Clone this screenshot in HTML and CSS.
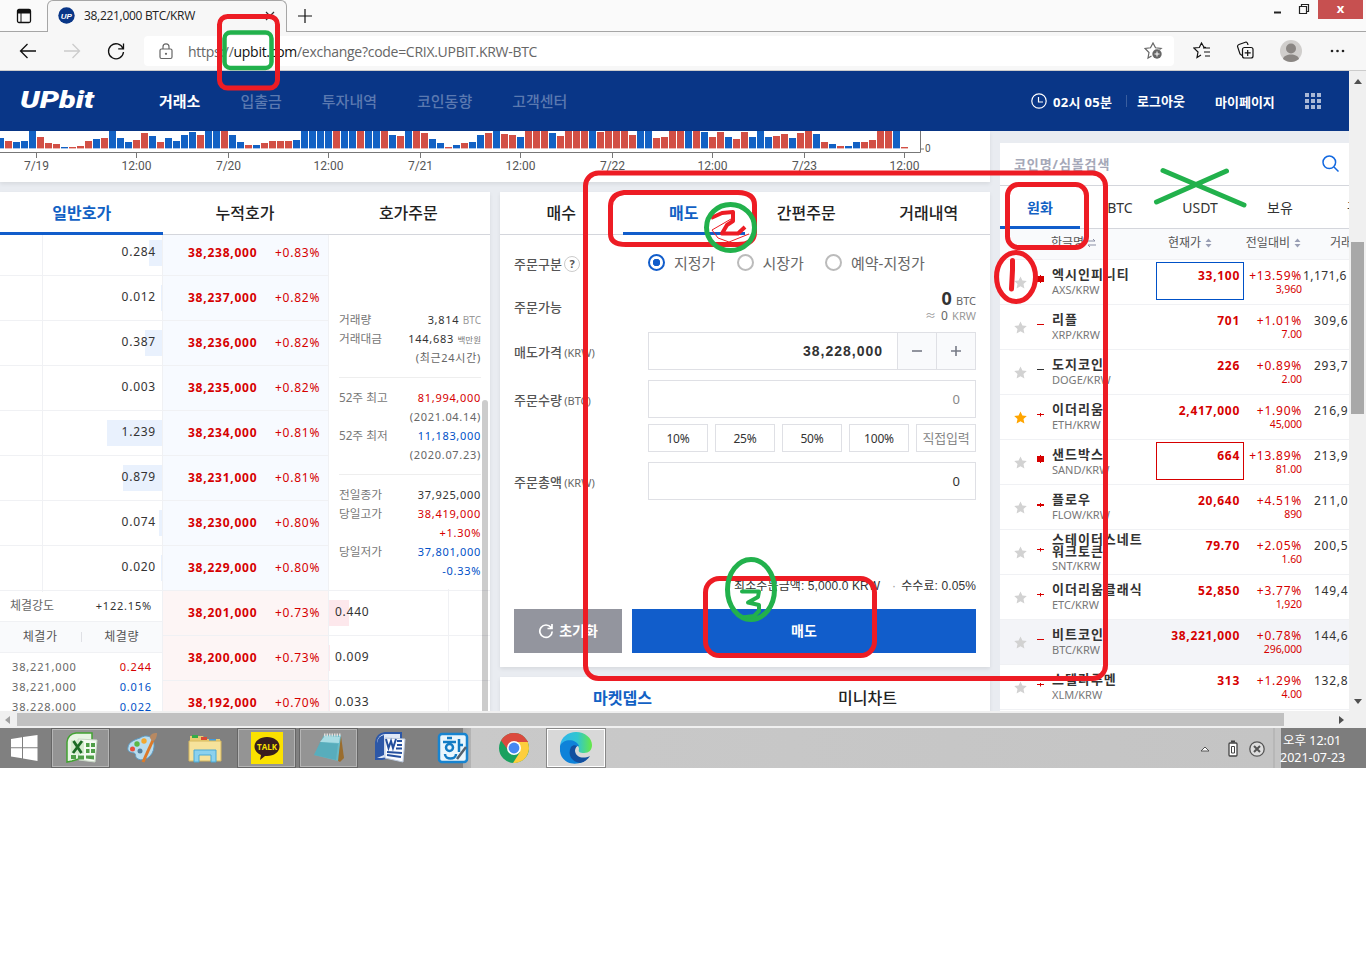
FILE: index.html
```html
<!DOCTYPE html>
<html lang="ko">
<head>
<meta charset="utf-8">
<title>38,221,000 BTC/KRW</title>
<link rel="stylesheet" href="styles.css">
</head>
<body>
<div class="desktop">
  <div class="tabstrip">
    <svg class="tab-actions" width="16" height="16" viewBox="0 0 16 16"><rect x="1.500" y="1.500" width="13" height="13" rx="1.500" fill="none" stroke="#111" stroke-width="1.300"/><path d="M1.500 2h13v3.500h-13z" fill="#111"/><path d="M5 5v9" stroke="#111"/></svg>
    <div class="tab">
      <svg width="17" height="17" viewBox="0 0 17 17"><circle cx="8.500" cy="8.500" r="8.200" fill="#093687"/><text x="8.300" y="11.500" text-anchor="middle" class="fav">UP</text></svg>
      <span class="tab-title">38,221,000 BTC/KRW</span>
      <svg width="10" height="10" viewBox="0 0 10 10"><path d="M1 1l8 8M9 1l-8 8" stroke="#333" stroke-width="1.200"/></svg>
    </div>
    <svg class="newtab" width="14" height="14" viewBox="0 0 14 14"><path d="M7 0v14M0 7h14" stroke="#111" stroke-width="1.200"/></svg>
    <div class="winctl">
      <svg width="36" height="19" viewBox="0 0 36 19"><path d="M0 12.500h7" stroke="#222" stroke-width="2"/><path d="M25.500 6.500h7v7h-7zM27.500 6V4.500h7v7H33" fill="none" stroke="#222" stroke-width="1.200"/></svg>
      <span class="close">x</span>
    </div>
  </div>
  <div class="toolbar">
    <svg class="navicons" width="106" height="20" viewBox="0 0 106 20"><g fill="none" stroke="#111" stroke-width="1.300"><path d="M17 10H1.500M8.500 3l-7 7 7 7"/><path d="M45 10h15.500M53.500 3l7 7-7 7" stroke="#ccc"/><path d="M104 7.500a7.500 7.500 0 1 0 .500 3.500M104.500 2.500v5.300h-5.300"/></g></svg>
    <div class="address">
      <svg width="14" height="17" viewBox="0 0 14 17"><g fill="none" stroke="#666" stroke-width="1.200"><rect x="1" y="6" width="12" height="9.500" rx="1.500"/><path d="M4 6V3.800a3 3 0 0 1 6 0V6"/></g><circle cx="7" cy="10.800" r="1.100" fill="#666"/></svg>
      <span class="url">https://<b>upbit.com</b>/exchange?code=CRIX.UPBIT.KRW-BTC</span>
      <svg class="addfav" width="20" height="18" viewBox="0 0 20 18"><path d="M15.500 7.500L17 6.500l-5.500-.700L9 1 6.500 5.800 1 6.500l4 4L4 16l3.500-2" fill="none" stroke="#666" stroke-width="1.200"/><circle cx="13" cy="12" r="4.700" fill="#666"/><path d="M13 9.500v5M10.500 12h5" stroke="#fff"/></svg>
    </div>
    <svg class="tools" width="156" height="24" viewBox="0 0 156 24"><g fill="none" stroke="#111" stroke-width="1.200"><path d="M13 8.500l-2-.300L8.500 4 6.300 8.500.800 9l4.200 4-1 5.500L8 16M10 9h7M11 13h6M12 17h5"/><path d="M49 16.500l-2-1.500-2.500-7.500q0-1.500 1.500-2l7-2.500q1.500 0 2 3"/><rect x="49.500" y="8.500" width="10.500" height="10.500" rx="2"/><path d="M54.700 11v6M51.700 13.800h6"/></g><circle cx="98" cy="12" r="11" fill="#d0cecc"/><circle cx="98" cy="9.500" r="5" fill="#8a8683"/><path d="M90 20c1-6 15-6 16 0-5 4-11 4-16 0z" fill="#8a8683"/><g fill="#222"><circle cx="139" cy="12" r="1.300"/><circle cx="144.500" cy="12" r="1.300"/><circle cx="150" cy="12" r="1.300"/></g></svg>
  </div>

  <div class="viewport">
    <div class="page">
      <header class="site">
        <svg class="logo" width="76" height="22" viewBox="0 0 76 22"><text x="0" y="18" class="logo-text" textLength="74" lengthAdjust="spacingAndGlyphs">UPbit</text></svg>
        <nav class="menu"><a class="on">거래소</a><a>입출금</a><a>투자내역</a><a>코인동향</a><a>고객센터</a></nav>
        <div class="account">
          <svg width="16" height="16" viewBox="0 0 16 16"><circle cx="8" cy="8" r="7.200" fill="none" stroke="#fff" stroke-width="1.200"/><path d="M7.500 4v5H12" fill="none" stroke="#fff" stroke-width="1.200"/></svg>
          <span class="clock">02시 05분</span><span class="logout">로그아웃</span><span class="mypage">마이페이지</span>
          <svg width="16" height="16" viewBox="0 0 16 16"><path d="M2 0v16M8 0v16M14 0v16" stroke="#a9b8d6" stroke-width="4" stroke-dasharray="4 2"/></svg>
        </div>
      </header>
      <div class="content">
        <div class="maincol">
          <section class="chart card">
            <div class="plot"><div class="bars" id="bars"></div><div class="zero">0</div></div>
            <svg class="axis" width="990" height="30" viewBox="0 0 990 30"><path d="M0 3.500H920.500V-18M920 0h4M36.500 3v6M136.500 3v6M228.500 3v6M328.500 3v6M420.500 3v6M520.500 3v6M612.500 3v6M712.500 3v6M804.500 3v6M904.500 3v6" fill="none" stroke="#777"/><g class="ticks" text-anchor="middle"><text x="36.500" y="20.500">7/19</text><text x="136.500" y="20.500">12:00</text><text x="228.500" y="20.500">7/20</text><text x="328.500" y="20.500">12:00</text><text x="420.500" y="20.500">7/21</text><text x="520.500" y="20.500">12:00</text><text x="612.500" y="20.500">7/22</text><text x="712.500" y="20.500">12:00</text><text x="804.500" y="20.500">7/23</text><text x="904.500" y="20.500">12:00</text></g></svg>
          </section>
          <div class="panels">
            <section class="book card">
              <div class="tabs"><a class="on">일반호가</a><a>누적호가</a><a>호가주문</a></div>
              <div class="bookgrid">
                <div class="asks">
                  <div class="rows" id="asks"></div>
                  <div class="power"><span>체결강도</span><b>+122.15%</b></div>
                  <div class="thead"><span>체결가</span><span>체결량</span></div>
                  <div class="trades"><p><span>38,221,000</span><i class="up">0.244</i></p><p><span>38,221,000</span><i class="dn">0.016</i></p><p><span>38,228,000</span><i class="dn">0.022</i></p></div>
                </div>
                <div class="rows prices" id="prices"></div>
                <div class="right">
                  <div class="info">
                    <dl><dt>거래량</dt><dd>3,814 <small>BTC</small></dd><dt>거래대금</dt><dd>144,683 <small class="tiny">백만원</small></dd><dt></dt><dd class="g">(최근24시간)</dd></dl>
                    <dl><dt>52주 최고</dt><dd class="up">81,994,000</dd><dt></dt><dd class="g">(2021.04.14)</dd><dt>52주 최저</dt><dd class="dn">11,183,000</dd><dt></dt><dd class="g">(2020.07.23)</dd></dl>
                    <dl><dt>전일종가</dt><dd>37,925,000</dd><dt>당일고가</dt><dd class="up">38,419,000</dd><dt></dt><dd class="up">+1.30%</dd><dt>당일저가</dt><dd class="dn">37,801,000</dd><dt></dt><dd class="dn">-0.33%</dd></dl>
                  </div>
                  <div class="rows bids" id="bids"></div>
                </div>
              </div>
              <i class="bookthumb"></i>
            </section>
            <div class="ordercol">
              <section class="order card">
                <div class="tabs"><a>매수</a><a class="on">매도</a><a>간편주문</a><a>거래내역</a></div>
                <div class="form">
                  <div class="line kind"><label>주문구분 <i class="help">?</i></label><div class="radios"><span class="sel">지정가</span><span>시장가</span><span>예약-지정가</span></div></div>
                  <div class="line avail"><label>주문가능</label><div class="bal"><p><b>0</b> <small>BTC</small></p><p class="sub"><small class="approx">≈</small> 0 <small>KRW</small></p></div></div>
                  <div class="line field"><label>매도가격 <small>(KRW)</small></label><div class="input price"><b>38,228,000</b><span><svg width="12" height="12"><path d="M1 6h10" stroke="#777b86" stroke-width="1.600"/></svg></span><span><svg width="12" height="12"><path d="M1 6h10M6 1v10" stroke="#777b86" stroke-width="1.600"/></svg></span></div></div>
                  <div class="line field qty"><label>주문수량 <small>(BTC)</small></label><div class="input pale">0</div></div>
                  <div class="percents"><span>10%</span><span>25%</span><span>50%</span><span>100%</span><span class="pale">직접입력</span></div>
                  <div class="line field"><label>주문총액 <small>(KRW)</small></label><div class="input">0</div></div>
                  <div class="fee"><span>최소주문금액: 5,000.0 KRW</span><span>수수료: 0.05%</span></div>
                  <div class="actions"><span class="reset"><svg width="16" height="16" viewBox="0 0 16 16"><path d="M13 4.500A6.200 6.200 0 1 0 14.200 8.500M14 1v4.500H9.500" fill="none" stroke="#fff" stroke-width="1.700"/></svg>초기화</span><span class="sell">매도</span></div>
                </div>
              </section>
              <section class="depth card"><b>마켓뎁스</b><span>미니차트</span></section>
            </div>
          </div>
        </div>
        <aside class="coins">
          <div class="search"><span>코인명/심볼검색</span><svg width="17" height="17" viewBox="0 0 17 17"><circle cx="7.300" cy="7.300" r="6.300" fill="none" stroke="#1268e0" stroke-width="1.500"/><path d="M12 12l4.500 4.500" stroke="#1268e0" stroke-width="1.500"/></svg></div>
          <div class="markets"><a class="on">원화</a><a>BTC</a><a>USDT</a><a>보유</a><a>관심</a></div>
          <div class="colhead"><span>한글명<svg width="9" height="10" viewBox="0 0 9 10"><path d="M0 3h8L6 1M9 7H1l2 2" fill="none" stroke="#8a8fa5"/></svg></span><span>현재가<svg width="7" height="10" viewBox="0 0 7 10"><path d="M.5 4l3-3.500 3 3.500zM.5 6l3 3.500 3-3.500z" fill="#9a9fb5"/></svg></span><span>전일대비<svg width="7" height="10" viewBox="0 0 7 10"><path d="M.5 4l3-3.500 3 3.500zM.5 6l3 3.500 3-3.500z" fill="#9a9fb5"/></svg></span><span>거래대금</span></div>
          <div id="coins"></div>
        </aside>
      </div>
    </div>
    <div class="vscroll"><i class="tri up"></i><i class="vthumb"></i><i class="tri down"></i></div>
  </div>
  <div class="hscroll"><i class="tri left"></i><i class="hthumb"></i><i class="tri rightt"></i></div>

  <div class="taskbar">
    <span class="app start"><svg width="28" height="28" viewBox="0 0 28 28"><path d="M1 5l11-1.700V13.300H1zM13 3.100L27.500 1v12.300H13zM1 14.300h11v10L1 22.600zM13 14.300h14.500V27L13 24.600z" fill="#fff"/></svg></span>
    <span class="app open"><svg width="34" height="32" viewBox="0 0 34 32"><path d="M3 30V10Q4 2 12 1h16v22L8 29z" fill="#e8f5e4" stroke="#42a332" stroke-width="1.500"/><path d="M14 7l19 1-2 22-16-2z" fill="#f4faf2" stroke="#c8d8c5"/><path d="M7 8l13 1v13l-13-1z" fill="#d4ebce"/><path d="M9.500 9l8 12M18 9l-9 12" stroke="#1c6b25" stroke-width="2.800"/><path d="M22 11h3.500v4H22zM27 11h4v4h-4zM22 17h3.500v4H22zM27 17h4v4h-4zM7 23h5v4H7zM14 23.500h6v4h-6zM22 23.500h8v4l-8-1z" fill="#4f9e48"/></svg></span>
    <span class="app"><svg width="34" height="32" viewBox="0 0 34 32"><path d="M14 6c8-5 15 0 14 9-1 10-10 15-16 12-4-2-1-5-4-6-4-1-7-1-6-6S8 8 14 6z" fill="#b9dcee" stroke="#5d9cc4"/><circle cx="6.500" cy="17" r="2.500" fill="#e84f3d"/><circle cx="11" cy="12" r="2.700" fill="#5cb744"/><circle cx="18" cy="9" r="2.700" fill="#f2a72e"/><circle cx="14" cy="19" r="2.500" fill="#557f9e"/><path d="M27 8L17 30" stroke="#dc7a29" stroke-width="3"/><path d="M24 6c0-4 3-5 7-5 0 3-1 8-5 8z" fill="#b88962"/></svg></span>
    <span class="app"><svg width="34" height="32" viewBox="0 0 34 32"><path d="M2 4h13l2 3h15v22H2z" fill="#e9cd72"/><path d="M4 3h6v3H4z" fill="#35ac48"/><path d="M13 5h6v3h-6z" fill="#d84a35"/><path d="M21 7h7v2h-7z" fill="#3f9be0"/><path d="M1 9h32v20H1z" fill="#f6e29b" stroke="#d6b85e"/><path d="M6 30V18h22v12h-5v-7H11v7z" fill="#8bd1ee" stroke="#4ba9d5"/></svg></span>
    <span class="app open"><svg width="32" height="32" viewBox="0 0 32 32"><path d="M0 0h32v32H0z" fill="#fae100"/><path d="M16 5c7 0 12.500 4 12.500 9.500S23 24 16 24h-2l-5 4 1-5c-4-1.500-6.500-5-6.500-8.500C3.500 9 9 5 16 5z" fill="#381e1e"/><text x="16" y="17.500" text-anchor="middle" class="talk">TALK</text></svg></span>
    <span class="app open"><svg width="34" height="32" viewBox="0 0 34 32"><path d="M29 4l3 22-4 4-5-3z" fill="#9a6d2e"/><path d="M12 3h17l-3 26L2 23z" fill="#68b9c6"/><path d="M13 4l15 1-1 6L8 10z" fill="#a9dce4"/><path d="M8 10l18 2-2 16L2 23z" fill="#4fa5b5" opacity=".6"/><path d="M12 3h17" stroke="#ddd" stroke-width="3" stroke-dasharray="1.500 1"/></svg></span>
    <span class="app"><svg width="34" height="32" viewBox="0 0 34 32"><path d="M2 27V10Q3 2 11 1h16v22L8 27z" fill="#dfe8f7" stroke="#2c57a7" stroke-width="2"/><path d="M3 26V11Q4 4 10 3v20z" fill="#2c57a7"/><path d="M11 6l20 1-2 23-18-4z" fill="#fafcff" stroke="#bbc8dc"/><path d="M12 7l2.500 9L17 9l2 7 3-9" fill="none" stroke="#244f9d" stroke-width="2"/><path d="M23 9h5M23 13h5M22 16.500h6M13 20l15 1M13 23l14 2" stroke="#244f9d" stroke-width="1.800"/></svg></span>
    <span class="app"><svg width="32" height="32" viewBox="0 0 32 32"><rect x="2" y="2" width="28" height="28" rx="3" fill="#eaf6fd" stroke="#1884d0" stroke-width="2.500"/><g fill="none" stroke="#127bc4" stroke-width="2.500"><path d="M10 6h5M6 10h13M8 22c0 6 11 6 11 0M22 7v13M22 13h4"/><circle cx="12.500" cy="15.500" r="3.500"/></g><path d="M29 15l-9 12" stroke="#54606c" stroke-width="2.500"/></svg></span>
    <span class="app chrome"><svg width="30" height="30" viewBox="0 0 30 30"><circle cx="15" cy="15" r="15" fill="#1aa15f"/><path d="M2 7.500A15 15 0 0 1 28 7.500Q30 9 28.500 9H15L9 17z" fill="#db4a3e"/><path d="M15 9h13.700A15 15 0 0 1 14 30l7-11z" fill="#fdce3d"/><circle cx="15" cy="15" r="7" fill="#fff"/><circle cx="15" cy="15" r="5.400" fill="#4587f3"/></svg></span>
    <span class="app open active"><svg width="32" height="32" viewBox="0 0 32 32"><defs><linearGradient id="eg" x1="0" x2="1"><stop offset="0" stop-color="#2fb4ee"/><stop offset=".55" stop-color="#31c6cf"/><stop offset="1" stop-color="#66e845"/></linearGradient></defs><path d="M0 14C1 5 8 0 16 0c9 0 16 6 16 13 0 5-3 8-8 8-4 0-6-1-5-4 0-5-9-9-19-3z" fill="url(#eg)"/><path d="M0 14c4-8 16-7 19 0-5 0-7 5-4 10 3 4 8 4 11 4C15 36-2 31 0 14z" fill="#0e82d9"/><path d="M11 15c-4 8 1 15 9 16 5-1 8-4 10-7-6 3-14 2-15-5 0-2 1-4 2-5-2-1-4-1-6 1z" fill="#124f9f"/></svg></span>
    <div class="tray"><svg width="66" height="20" viewBox="0 0 66 20"><path d="M1 12l4-4 4 4z" fill="#fff" stroke="#555"/><rect x="29" y="4" width="8" height="13" rx="1" fill="#fff" stroke="#444" stroke-width="1.300"/><path d="M31 2.500h4" stroke="#444" stroke-width="2"/><path d="M31.500 7.500h3v6.500h-3z" stroke="#444" fill="#fff"/><circle cx="57" cy="10" r="7.200" fill="#ddd" stroke="#555" stroke-width="1.300"/><path d="M54 7l6 6M60 7l-6 6" stroke="#555" stroke-width="2"/></svg></div>
    <div class="time"><span>오후 12:01</span><span>2021-07-23</span></div>
  </div>

  <svg class="marks" width="1366" height="959" viewBox="0 0 1366 959">
    <g fill="none" stroke="#ed1c24" stroke-width="5">
      <rect x="219.500" y="16.500" width="58" height="71.500" rx="8"/>
      <rect x="585.500" y="173" width="520" height="505.500" rx="13"/>
      <rect x="1007.500" y="184.500" width="79" height="63" rx="11"/>
      <path d="M624 192.500H738Q754.500 193 754.500 205V232Q754.500 244.500 738 244.500H626Q610.500 244.500 610.500 234V206Q611 194 624 192.500z"/>
      <rect x="705.500" y="578.500" width="169" height="77" rx="14"/>
      <ellipse cx="1016" cy="277" rx="19.500" ry="24.500"/>
      <path d="M1012.500 260.500V270L1011.500 289" stroke-linecap="round"/>
      <path d="M711 218L722 213L733 212V221L727 225L722 233.500H738L745 227" stroke-width="4" stroke-linejoin="round"/>
      <path d="M731 219L712 230L718 238L729 242L749 234" stroke-width="1"/>
    </g>
    <g fill="none" stroke="#22b14c" stroke-width="5" stroke-linecap="round" stroke-linejoin="round">
      <rect x="224.500" y="32.500" width="47" height="35.500" rx="6" stroke-width="4.500"/>
      <ellipse cx="730.500" cy="227.500" rx="24" ry="23"/>
      <ellipse cx="751" cy="589.500" rx="23.500" ry="30"/>
      <path d="M742 591.500H759L758 597L748 602.500L759 605V611L754 616L742 617.500" stroke-width="4"/>
      <path d="M1163 170.500l81 34.500M1156.500 202l70-31"/>
    </g>
  </svg>
</div>
<script src="app.js"></script>
</body>
</html>
```

FILE: styles.css
```css
*, *::before, *::after { box-sizing: border-box; }
body { margin: 0; background: #fff; font-family: "Noto Sans", "Noto Sans CJK KR", sans-serif; font-size: 12px; color: #333; }
p, dl, dd { margin: 0; }
svg { display: block; flex: none; }
i { font-style: normal; }
.desktop { position: relative; width: 1366px; height: 959px; overflow: hidden; }
.marks { position: absolute; left: 0; top: 0; }
.up { color: #d60000; }
.dn { color: #0051c7; }

/* browser chrome */
.tabstrip { display: flex; height: 32px; background: #fafafa; border-bottom: 1px solid #a6a6a6; font-family: "Open Sans", sans-serif; }
.tab-actions { margin: 8px 15px 0 16px; }
.tab { display: flex; align-items: center; width: 240px; height: 32px; padding: 0 11px 2px 10px; background: #f7f7f7; border: 1px solid #a6a6a6; border-bottom: 0; border-radius: 6px 6px 0 0; }
.tab-title { flex: 1; margin-left: 9px; color: #222; font-size: 12px; letter-spacing: -.3px; }
.fav { font: italic bold 8px "Liberation Sans", sans-serif; fill: #fff; }
.newtab { margin: 9px 0 0 11px; }
.winctl { display: flex; margin-left: auto; padding-right: 3px; }
.winctl svg { margin-right: 8px; }
.close { width: 45px; height: 19px; background: #c75050; color: #fff; text-align: center; font: bold 13px/17px "Open Sans", sans-serif; }
.toolbar { display: flex; align-items: center; height: 39px; background: #f7f7f7; border-bottom: 1px solid #ccc; padding-left: 19px; }
.navicons { margin-right: 19px; }
.address { display: flex; align-items: center; width: 1030px; height: 30px; margin-right: 19px; padding: 0 10px 0 15px; background: #fff; border-radius: 4px; }
.url { margin-left: 15px; font: 14px "Open Sans", sans-serif; color: #666; letter-spacing: -.28px; }
.url b { color: #111; font-weight: 400; }
.addfav { margin-left: auto; }

/* viewport and scrollbars */
.viewport { display: flex; height: 640px; }
.page { width: 1349px; height: 640px; overflow: hidden; background: #e9ecf1; }
.vscroll { display: flex; flex-direction: column; align-items: center; width: 17px; background: #f0f0f0; }
.vthumb { width: 13px; height: 172px; margin: 158px 0 auto; background: #a8a8a8; }
.tri { width: 0; height: 0; border: 4px solid transparent; }
.tri.up { border-bottom: 5px solid #505050; border-top: 0; margin-top: 8px; }
.tri.down { border-top: 5px solid #505050; border-bottom: 0; margin-bottom: 7px; }
.hscroll { display: flex; align-items: center; height: 17px; background: #f0f0f0; }
.tri.left { margin: 0 7px 0 1px; border-right: 5px solid #a0a0a0; }
.tri.rightt { margin: 0 18px 0 auto; border-left: 5px solid #505050; }
.hthumb { width: 1267px; height: 13px; background: #c1c1c1; }

/* site header */
.site { display: flex; align-items: center; height: 60px; background: #093687; color: #fff; padding-left: 20px; }
.logo-text { font: italic 900 24px "Roboto", sans-serif; fill: #fff; }
.menu { display: flex; gap: 40px; margin-left: 63px; padding-bottom: 2px; font-size: 15px; font-weight: 500; color: #5b79b0; }
.menu .on { color: #fff; font-weight: 700; }
.account { display: flex; align-items: center; margin-left: auto; padding-right: 28px; font-size: 13px; font-weight: 700; }
.clock { width: 73px; margin-left: 6px; white-space: nowrap; letter-spacing: .3px; }
.logout { width: 89px; padding-left: 10px; border-left: 1px solid #3a5e9f; line-height: 12px; }
.mypage { width: 90px; }
.content { display: flex; gap: 10px; }
.maincol { flex: none; width: 990px; }
.card { background: #fff; box-shadow: 0 2px 4px rgba(0, 0, 0, .08); }

/* chart */
.chart { height: 51px; overflow: hidden; }
.plot { display: flex; align-items: flex-end; height: 18px; }
.bars { display: flex; align-items: flex-end; gap: 1px; width: 908px; height: 18px; overflow: hidden; justify-content: flex-end; }
.bars i { flex: none; width: 7px; background: #1261c4; border-bottom: 1px solid #a9c5ea; }
.bars i.r { background: #d24f45; border-bottom-color: #edb9b5; }
.zero { margin-left: 17px; font: 10px/10px "Roboto", sans-serif; color: #555; height: 5px; }
.axis { overflow: visible; }
.ticks { font: 12px "Roboto", sans-serif; fill: #555; }

/* panels */
.panels { display: flex; gap: 10px; margin-top: 10px; }
.tabs { display: flex; height: 43px; border-bottom: 1px solid #d4d6dc; font-size: 16px; font-weight: 500; color: #222; }
.tabs a { flex: 1; height: 43px; line-height: 43px; text-align: center; }
.tabs .on { color: #1261c4; font-weight: 700; border-bottom: 3px solid #115dcb; }
.book { position: relative; width: 490px; height: 519px; overflow: hidden; }
.bookgrid { display: grid; grid-template-columns: 163px 166px 161px; height: 476px; overflow: hidden; }
.asks { border-right: 1px solid #f0f1f4; }
.rows div { display: flex; align-items: center; height: 45px; border-bottom: 1px solid #f0f1f4; letter-spacing: .75px; }
#asks, #prices { margin-top: -4px; }
#asks div { position: relative; justify-content: flex-end; padding: 0 6px 3px 0; }
#asks div::before { content: ""; width: 43px; height: 48px; margin: 3px auto 0 0; border-right: 1px solid #f0f1f4; }
#asks div i, #bids div i { position: absolute; right: 0; top: 9px; height: 26px; background: #e9f1fd; }
.rows span { position: relative; }
#prices div { padding: 0 0 1px 25px; background: #f7faff; }
#prices { border-right: 1px solid #f0f1f4; color: #d60000; }
#prices b { width: 87px; }
#prices .b { background: #fdf5f5; }
#bids div { position: relative; padding: 0 0 3px 6px; }
#bids div::after { content: ""; width: 42px; height: 48px; margin: 3px 0 0 auto; border-left: 1px solid #f0f1f4; }
#bids div i { left: 0; right: auto; background: #fde8ec; }
.power { display: flex; justify-content: space-between; align-items: center; height: 31px; padding: 0 10px 2px 10px; border-bottom: 1px solid #f0f1f4; color: #666; font-size: 12px; }
.power b { font-size: 11px; font-weight: 400; color: #333; letter-spacing: .8px; }
.thead { display: flex; align-items: center; height: 31px; border-bottom: 1px solid #f0f1f4; background: #f9fafc; color: #555; letter-spacing: .7px; }
.thead span { flex: 1; text-align: center; line-height: 10px; }
.thead span + span { border-left: 1px solid #dfe0e5; }
.trades { padding-top: 4px; font-size: 11px; color: #666; letter-spacing: .85px; }
.trades p { display: flex; justify-content: space-between; height: 20px; line-height: 20px; padding: 0 10px 0 12px; }
.info { height: 356px; padding: 75px 9px 0 10px; border-bottom: 1px solid #f0f1f4; }
.info dl { display: grid; grid-template-columns: 52px 90px; align-content: start; height: 68px; line-height: 19px; font-size: 11px; border-bottom: 1px solid #eee; }
.info dl + dl { height: 97px; padding-top: 10px; }
.info dl + dl + dl { height: auto; padding-top: 10px; border: 0; }
.info dt { height: 19px; color: #777; white-space: nowrap; font-size: 11.700px; }
.info dd { height: 19px; text-align: right; white-space: nowrap; letter-spacing: .7px; }
.info .g { color: #666; }
.info small { font-size: 10px; color: #999; letter-spacing: 0; }
.info .tiny { font-size: 8.500px; color: #777; }
.bookthumb { position: absolute; left: 482px; top: 208px; width: 6px; height: 320px; border-radius: 3px; background: rgba(0, 0, 0, .2); }

/* order form */
.ordercol { width: 490px; }
.order { height: 475px; }
.form { padding: 0 14px; }
.line { display: flex; align-items: center; }
.line label { width: 134px; font-size: 13px; font-weight: 500; color: #555; white-space: nowrap; }
.line label small { font-size: 11px; font-weight: 400; color: #666; margin-left: -1px; }
.kind { height: 56px; }
.help { display: inline-block; width: 16px; height: 16px; border: 1px solid #ccc; border-radius: 50%; line-height: 14px; text-align: center; font-weight: 700; font-size: 11px; margin-left: -1px; vertical-align: 1px; }
.radios { display: flex; font-size: 15px; color: #666; white-space: nowrap; margin-top: -2px; }
.radios span { display: flex; align-items: center; width: 88.500px; }
.radios span::before { content: ""; width: 17px; height: 17px; margin: 1px 9px 0 0; border: 2px solid #bbb; border-radius: 50%; flex: none; }
.radios .sel::before { border-color: #115dcb; background: radial-gradient(circle, #115dcb 3.500px, #fff 4px); }
.avail { height: 31px; }
.bal { flex: 1; text-align: right; color: #666; }
.bal p { height: 17px; line-height: 17px; font-size: 12px; }
.bal b { font-size: 18px; color: #333; }
.bal small { font-size: 11px; margin-left: 1px; }
.bal .sub small { color: #999; }
.bal .approx { margin-right: 2px; }
.field { height: 38px; margin-top: 10px; }
.input { display: flex; flex: 1; align-items: center; justify-content: flex-end; height: 38px; padding-right: 15px; border: 1px solid #dfe0e5; font-size: 13px; }
.pale { color: #888; }
.price { padding: 0; font: 14px "Liberation Sans", sans-serif; letter-spacing: 1px; }
.price b { margin-right: 14px; }
.price span { display: flex; align-items: center; justify-content: center; width: 39px; height: 36px; border-left: 1px solid #dfe0e5; background: #f9fafc; }
.percents { display: flex; gap: 7px; margin: 6px 0 0 134px; }
.percents span { width: 60px; height: 28px; line-height: 27px; border: 1px solid #dfe0e5; text-align: center; letter-spacing: -.2px; white-space: nowrap; }
.percents .pale { font-size: 13px; }
.fee { display: flex; justify-content: flex-end; gap: 12px; height: 18px; margin-top: 77px; line-height: 18px; font-family: "Liberation Sans", "Noto Sans CJK KR", sans-serif; font-size: 12px; }
.fee span { letter-spacing: .1px; }
.fee span::before { content: "·"; margin-right: 5px; color: #999; }
.actions { display: flex; gap: 10px; margin-top: 14px; color: #fff; font-size: 14px; font-weight: 700; line-height: 44px; text-align: center; }
.reset { display: flex; align-items: center; justify-content: center; gap: 5px; width: 108px; background: #93959e; }
.sell { flex: 1; background: #115dcb; }
.depth { display: flex; height: 60px; margin-top: 10px; line-height: 43px; text-align: center; font-size: 16px; color: #222; }
.depth b { flex: 1; color: #1261c4; }
.depth span { flex: 1; font-weight: 500; }

/* coin list */
.coins { width: 349px; height: 600px; margin-top: 12px; background: #fff; overflow: hidden; }
.search { display: flex; align-items: center; justify-content: space-between; height: 43px; padding: 0 10px 2px 14px; border-bottom: 1px solid #d4d6dc; color: #a5a8b8; font-size: 13px; font-weight: 700; letter-spacing: .9px; }
.markets { display: flex; width: 400px; height: 43px; border-bottom: 1px solid #d4d6dc; font-size: 14px; }
.markets a { flex: none; width: 80px; height: 43px; line-height: 43px; text-align: center; }
.markets .on { color: #1261c4; font-weight: 700; border-bottom: 3px solid #115dcb; }
.colhead { display: grid; grid-template-columns: 146px 98px 60px 80px; height: 31px; line-height: 28px; background: #f9fafc; border-bottom: 1px solid #f0f1f4; color: #555; font-size: 12px; }
.colhead span { display: flex; align-items: center; justify-content: flex-end; gap: 4px; white-space: nowrap; padding-bottom: 2px; }
.colhead span:first-child { padding-right: 50px; gap: 3px; }
.colhead span:nth-child(2) { padding-right: 32px; }
.colhead span:nth-child(3) { padding-right: 3px; }
.colhead span:last-child { justify-content: flex-start; padding-left: 26px; }
.coin { display: grid; grid-template-columns: 34px 18px 104px 88px 58px 47px; height: 45px; border-bottom: 1px solid #f0f1f4; }
.coin.sel { background: #f3f4f8; }
.coin .star { margin: 16px 0 0 14px; }
.coin .candle { margin: 10px 0 0 1px; }
.nm { white-space: nowrap; line-height: 13px; font-size: 11px; color: #777; padding-top: 8px; }
.nm b { display: block; font-size: 13px; line-height: 13px; margin-bottom: 2px; color: #333; letter-spacing: 1px; }
.two .nm { padding-top: 3px; }
.two .nm b { line-height: 12px; }
.pr { height: 38px; margin-top: 2px; padding: 4px 3px 0 0; border: 1px solid transparent; text-align: right; font-weight: 700; color: #d60000; letter-spacing: .7px; line-height: 18px; }
.pr.bd { border-color: #0051c7; }
.pr.br { border-color: #d60000; }
.ch { padding-top: 8px; text-align: right; color: #d60000; line-height: 16px; white-space: nowrap; letter-spacing: .75px; }
.ch small { display: block; font-size: 10.500px; line-height: 11px; letter-spacing: -.1px; }
.ch bdi { display: block; margin-left: -6px; }
.vol { padding: 8px 0 0 12px; line-height: 16px; letter-spacing: .75px; white-space: nowrap; }
.vol.wide { padding-left: 1px; letter-spacing: .45px; }

/* taskbar */
.taskbar { display: flex; height: 40px; background: linear-gradient(90deg, #808080 463px, #aaa 463px, #b4b4b4 471px, #c9c9c9 471px, #c4c4c4 1273px, #aaa 1274px, #c4c4c4 1275px, #c4c4c4 1281px, #7d7d7d 1281px); }
.app { display: flex; align-items: center; justify-content: center; width: 59px; margin-right: 3px; height: 40px; }
.app.start { width: 48px; }
.app.open { background: #949494; border: 1px solid #666; box-shadow: inset 0 0 0 1px #b5b5b5; }
.app.active { background: #d8d8d8; border-color: #888; box-shadow: inset 0 0 0 1px #fff; width: 60px; }
.app.chrome { width: 58px; }
.talk { font: bold 8px "Open Sans", sans-serif; fill: #fae100; }
.tray { margin: 11px 14px 0 auto; }
.time { display: flex; flex-direction: column; width: 86px; padding-top: 4px; color: #fff; font-size: 12.500px; line-height: 17px; }
.time span:first-child { padding-left: 3px; }
```

FILE: app.js
```js
// Volume bars: colour (b = fall, r = rise) followed by height in pixels.
const volume = 'b11 r8 b7 b8 b18 r12 r6 r5 b2 r2 r3 r8 b10 r11 b18 b11 b7 r9 r16 b13 r7 b11 b8 b14 b17 r14 b18 b18 r18 b14 b7 r4 b4 r6 r8 r8 r8 b9 b18 b18 b18 b18 r18 b18 b18 r18 b18 b18 r18 b14 r13 b18 r18 r16 b10 b6 r2 b4 r6 b7 b14 r16 b18 r15 r14 b12 r18 r18 r18 b16 r13 r18 r18 r18 b18 r17 r18 r18 r18 r14 b18 b18 r11 r12 r18 r18 b18 r18 b17 r12 r17 b12 r10 r17 b12 b18 b12 r13 r15 b11 r16 r18 b15 r7 b5 r3 b3 b7 r7 r9 r18 r18 b18 r2';
const put = (id, html) => { document.getElementById(id).innerHTML = html; };

put('bars', volume.split(' ').map(v => `<i class="${v[0]}" style="height:${v.slice(1)}px"></i>`).join(''));

const asks = [['0.284', 13], ['0.012', 1], ['0.387', 17], ['0.003', 0], ['1.239', 55], ['0.879', 39], ['0.074', 3], ['0.020', 1]];
put('asks', asks.map(([v, w]) => `<div><i style="width:${w}px"></i><span>${v}</span></div>`).join(''));

const prices = [['238', '83'], ['237', '82'], ['236', '82'], ['235', '82'], ['234', '81'], ['231', '81'], ['230', '80'], ['229', '80'], ['201', '73'], ['200', '73'], ['192', '70']];
put('prices', prices.map(([p, c], i) => `<div class="${i > 7 ? 'b' : 'a'}"><b>38,${p},000</b><span>+0.${c}%</span></div>`).join(''));

put('bids', [['0.440', 20], ['0.009', 1], ['0.033', 1]].map(([v, w]) => `<div><i style="width:${w}px"></i><span>${v}</span></div>`).join(''));

// name, symbol, price, change, difference, turnover, candle body height, price box
const coins = [
  ['엑시인피니티', 'AXS', '33,100', '+13.59%', '3,960', '1,171,6', 6, 'bd'],
  ['리플', 'XRP', '701', '+1.01%', '7.00', '309,6', 1, ''],
  ['도지코인', 'DOGE', '226', '+0.89%', '2.00', '293,7', 1, ''],
  ['이더리움', 'ETH', '2,417,000', '+1.90%', '45,000', '216,9', 1.5, ''],
  ['샌드박스', 'SAND', '664', '+13.89%', '81.00', '213,9', 6, 'br'],
  ['플로우', 'FLOW', '20,640', '+4.51%', '890', '211,0', 2, ''],
  ['스테이터스네트<br>워크토큰', 'SNT', '79.70', '+2.05%', '1.60', '200,5', 1.5, ''],
  ['이더리움클래식', 'ETC', '52,850', '+3.77%', '1,920', '149,4', 1.5, ''],
  ['비트코인', 'BTC', '38,221,000', '+0.78%', '296,000', '144,6', 1, ''],
  ['스텔라루멘', 'XLM', '313', '+1.29%', '4.00', '132,8', 1.5, ''],
];
const star = 'M6.500.500l1.900 4 4.400.500-3.300 3 .900 4.400-3.900-2.200-3.900 2.200.900-4.400-3.300-3L4.600 4.500z';
put('coins', coins.map(([n, s, p, c, d, v, h, box], i) => {
  const cls = (s === 'BTC' ? ' sel' : '') + (n.includes('<br>') ? ' two' : '');
  const colour = s === 'DOGE' ? '#333' : '#d60000';
  const top = h > 3 ? 6 : 9;
  const wick = h > 1 ? `<path d="M5.500 ${top - 1}v${h + 2}" stroke="${colour}"/>` : '';
  return `<div class="coin${cls}">
    <svg class="star" width="13" height="13"><path d="${star}" fill="${s === 'ETH' ? '#ffa500' : '#d2d2d2'}"/></svg>
    <svg class="candle" width="12" height="16"><rect x="2" y="${top}" width="7" height="${Math.floor(h)}" fill="${colour}"/>${wick}</svg>
    <div class="nm"><b>${n}</b>${s}/KRW</div>
    <div class="pr ${box}">${p}</div>
    <div class="ch"><bdi>${c}</bdi><small>${d}</small></div>
    <div class="vol${i ? '' : ' wide'}">${v}</div>
  </div>`;
}).join(''));
```
